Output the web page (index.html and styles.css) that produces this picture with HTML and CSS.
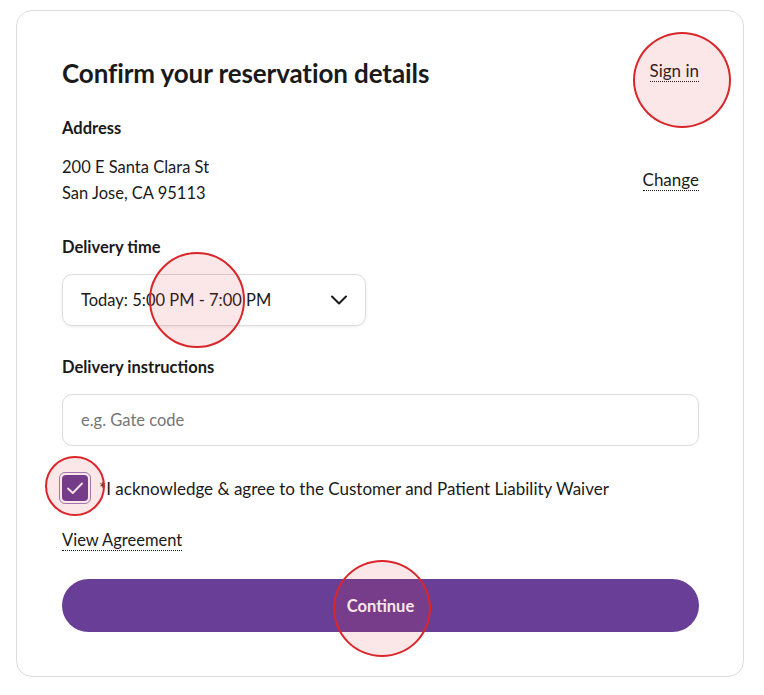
FILE: index.html
```html
<!DOCTYPE html>
<html>

<head>
    <meta name="viewport" content="width=device-width, initial-scale=1"/>
    <link rel="stylesheet" href="styles.css">
</head>

<body>
    <div class="card">
        <div class="card-head">
            <h1>Confirm your reservation details</h1>
            <a class="link signin">Sign in</a>
            <span class="marker marker-signin"></span>
        </div>

        <div class="section first">
            <div class="label">Address</div>
            <div class="address-row">
                <div class="address">
                    200 E Santa Clara St<br>
                    San Jose, CA 95113
                </div>
                <a class="link">Change</a>
            </div>
        </div>

        <div class="section">
            <div class="label">Delivery time</div>
            <div class="select">
                <span>Today: 5:00 PM - 7:00 PM</span>
                <svg width="20" height="20" viewBox="0 0 20 20"><path d="M3 6.5 L10 13.5 L17 6.5" fill="none" stroke="#1a1a1a" stroke-width="2" stroke-linecap="round" stroke-linejoin="round"/></svg>
                <span class="marker marker-time"></span>
            </div>
        </div>

        <div class="section">
            <div class="label">Delivery instructions</div>
            <div class="input">e.g. Gate code</div>
        </div>

        <div class="agree">
            <span class="checkbox">
                <span class="box">
                    <svg width="20" height="20" viewBox="0 0 20 20"><path d="M3 10.5 L7.8 15 L17 5.5" fill="none" stroke="#fff" stroke-width="1.8" stroke-linecap="round" stroke-linejoin="round"/></svg>
                </span>
                <span class="marker marker-check"></span>
            </span>
            <span class="agree-text">*I acknowledge &amp; agree to the Customer and Patient Liability Waiver</span>
        </div>

        <a class="link view">View Agreement</a>

        <div class="button">
            Continue
            <span class="marker marker-continue"></span>
        </div>
    </div>
</body>

</html>
```

FILE: styles.css
```css
body {
    margin: 0;
    background: #fff;
    font-family: Lato, "Open Sans", sans-serif;
    color: #1a1a1a;
}

.card {
    margin: 10px 20px 0 16px;
    border: 1px solid #dcdcdc;
    border-radius: 16px;
    padding: 46px 44px 44px 45px;
}

.card-head {
    position: relative;
    display: flex;
    justify-content: space-between;
    align-items: center;
}

h1 {
    margin: 0;
    font-size: 26px;
    line-height: 32px;
    font-weight: 700;
    letter-spacing: -0.1px;
}

.link {
    display: inline-block;
    font-size: 17px;
    line-height: 20px;
    border-bottom: 1px dotted #1a1a1a;
    color: #1a1a1a;
}

.signin {
    margin-top: -4px;
}

.section {
    margin-top: 30px;
}

.section.first {
    margin-top: 28px;
}

.label {
    font-size: 16.5px;
    font-weight: 700;
    line-height: 22px;
}

.address-row {
    display: flex;
    justify-content: space-between;
    align-items: center;
    margin-top: 15px;
}

.address {
    font-size: 16.5px;
    line-height: 26px;
}

.select {
    position: relative;
    margin-top: 16px;
    width: 304px;
    height: 52px;
    box-sizing: border-box;
    border: 1px solid #dcdcdc;
    border-radius: 10px;
    box-shadow: 0 1px 3px rgba(0,0,0,0.08);
    display: flex;
    align-items: center;
    justify-content: space-between;
    padding: 0 16px 0 18px;
    font-size: 16.5px;
}

.input {
    margin-top: 16px;
    height: 52px;
    box-sizing: border-box;
    border: 1px solid #dcdcdc;
    border-radius: 10px;
    display: flex;
    align-items: center;
    padding: 0 18px;
    font-size: 16.5px;
    color: #757575;
}

.agree {
    margin-top: 26px;
    display: flex;
    align-items: center;
    gap: 8px;
    margin-left: -3px;
}

.checkbox {
    position: relative;
    width: 32px;
    height: 32px;
    box-sizing: border-box;
    border: 1px solid #9b7cbf;
    border-radius: 6px;
    padding: 2px;
}

.box {
    display: flex;
    align-items: center;
    justify-content: center;
    width: 26px;
    height: 26px;
    background: #673d95;
    border-radius: 4px;
}

.agree-text {
    font-size: 17px;
}

.view {
    margin-top: 26px;
    font-size: 16.5px;
}

.button {
    position: relative;
    margin-top: 28px;
    height: 53px;
    border-radius: 27px;
    background: #693e97;
    color: #fff;
    font-weight: 700;
    font-size: 16.5px;
    display: flex;
    align-items: center;
    justify-content: center;
}

/* click markers */
.marker {
    position: absolute;
    border: 2px solid #d9262b;
    border-radius: 50%;
    background: rgba(220, 60, 60, 0.12);
    box-sizing: border-box;
}

.marker-signin {
    width: 98px;
    height: 96px;
    right: -32px;
    top: -25px;
}

.marker-time {
    width: 96px;
    height: 96px;
    left: 86px;
    top: -23px;
}

.marker-check {
    width: 60px;
    height: 60px;
    left: -15px;
    top: -17px;
}

.marker-continue {
    width: 98px;
    height: 97px;
    left: 271px;
    top: -19px;
}
```
